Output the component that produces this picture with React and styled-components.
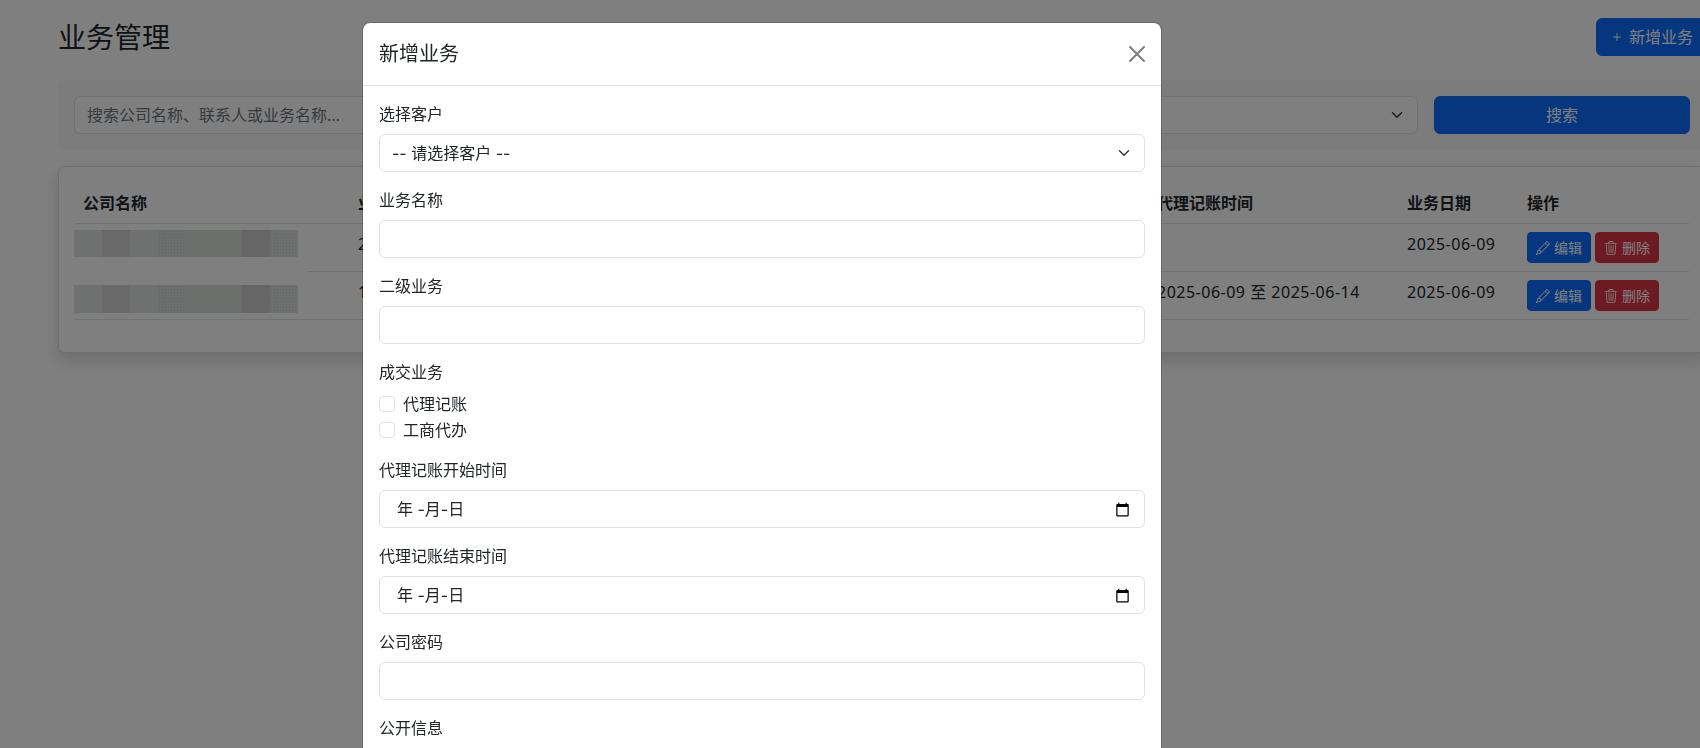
import React from 'react';
import styled, { createGlobalStyle } from 'styled-components';
import { BsPencil, BsPlus, BsTrash3 } from 'react-icons/bs';

const chevron = `url("data:image/svg+xml,%3csvg xmlns='http://www.w3.org/2000/svg' viewBox='0 0 16 16'%3e%3cpath fill='none' stroke='%23343a40' stroke-linecap='round' stroke-linejoin='round' stroke-width='2' d='m2 5 6 6 6-6'/%3e%3c/svg%3e")`;

// hyphens are wider in the control text than in the body font
const controlFont = `Inter, "Noto Sans CJK SC", sans-serif`;

const GlobalStyle = createGlobalStyle`
  * { box-sizing: border-box; }
  html, body { height: 100%; overflow: hidden; }
  body {
    margin: 0;
    background: #fff;
    color: #212529;
    font-family: "Noto Sans", "Noto Sans CJK SC", sans-serif;
    font-size: 16px;
    line-height: 24px;
  }
`;

const Main = styled.main`
  width: 1648px;
  margin-left: 58px;
  padding-top: 18px;
`;

const TopBar = styled.header`
  display: flex;
  align-items: center;
  justify-content: space-between;
  height: 38px;
  margin-bottom: 24px;
`;

const Title = styled.h1`
  margin: 0;
  font-size: 28px;
  font-weight: 400;
  line-height: 34px;
`;

const Button = styled.button`
  display: inline-flex;
  align-items: center;
  justify-content: center;
  height: ${p => (p.$small ? '31px' : '38px')};
  padding: ${p => (p.$small ? '0 8px' : '0 12px')};
  border: 1px solid ${p => (p.$danger ? '#dc3545' : '#0d6efd')};
  border-radius: ${p => (p.$small ? '4px' : '6px')};
  background: ${p => (p.$danger ? '#dc3545' : '#0d6efd')};
  color: #fff;
  font: inherit;
  font-size: ${p => (p.$small ? '14px' : '16px')};
  svg { flex: none; margin-right: 4px; }
`;

const SearchButton = styled(Button)`
  width: 100%;
`;

const SearchPanel = styled.section`
  display: grid;
  grid-template-columns: 800px 528px 256px;
  gap: 16px;
  padding: 16px;
  margin-bottom: 16px;
  background: #f8f9fa;
  border-radius: 6px;
`;

const controlBase = `
  display: block;
  width: 100%;
  height: 38px;
  padding: 6px 12px;
  border: 1px solid #dee2e6;
  border-radius: 6px;
  background-color: #fff;
  color: #212529;
  font: inherit;
  outline: none;
`;

const Input = styled.input`
  ${controlBase}
  &::placeholder { color: #6c757d; opacity: 1; }
`;

const Select = styled.select`
  ${controlBase}
  font-family: ${controlFont};
  appearance: none;
  padding-right: 36px;
  background-image: ${chevron};
  background-repeat: no-repeat;
  background-position: right 12px center;
  background-size: 16px 12px;
`;

const Card = styled.section`
  position: relative;
  padding: 16px;
  background: #fff;
  border: 1px solid rgba(0, 0, 0, 0.125);
  border-radius: 6px;
  box-shadow: 0 8px 16px rgba(0, 0, 0, 0.15);
`;

const Table = styled.table`
  width: 1614px;
  margin-bottom: 16px;
  border-collapse: collapse;
  table-layout: fixed;
  th, td {
    padding: 8px;
    border-bottom: 1px solid #dee2e6;
    text-align: left;
    vertical-align: top;
    white-space: nowrap;
  }
  th { font-weight: 700; }
`;

const DateText = styled.span`
  letter-spacing: 0.5px;
`;

const Actions = styled.div`
  display: flex;
  gap: 4px;
`;

// redacted company names, pasted over the first column
const Redaction = styled.div`
  position: absolute;
  left: 3px;
  top: 61px;
  width: 245px;
  height: 88px;
  padding: 2px 9px 0 12px;
  background: #fefefe;
`;

const MosaicBar = styled.div`
  display: grid;
  grid-template-columns: 28px 28px 28px 28px 56px 28px 28px;
  height: ${p => p.$height}px;
  margin-bottom: 28px;
`;

const MosaicCell = styled.div`
  background-color: ${p => p.$color};
  background-image: ${p => (p.$dotted ? 'radial-gradient(circle, #c8cac9 0.7px, transparent 0.8px)' : 'none')};
  background-size: 3px 3px;
`;

const Backdrop = styled.div`
  position: fixed;
  inset: 0;
  padding: 22px 0 0 362px;
  background: rgba(0, 0, 0, 0.5);
  overflow: hidden;
`;

const Dialog = styled.div`
  width: 800px;
  background: #fff;
  background-clip: padding-box;
  border: 1px solid rgba(0, 0, 0, 0.175);
  border-radius: 8px;
`;

const DialogHeader = styled.div`
  display: flex;
  align-items: center;
  justify-content: space-between;
  padding: 16px;
  border-bottom: 1px solid #dee2e6;
`;

const DialogTitle = styled.h2`
  margin: 0;
  font-size: 20px;
  font-weight: 400;
  line-height: 30px;
`;

const CloseButton = styled.button`
  display: flex;
  width: 16px;
  height: 16px;
  padding: 0;
  border: 0;
  background: none;
  color: #000;
  opacity: 0.5;
`;

const DialogBody = styled.form`
  padding: 16px;
`;

const Field = styled.div`
  margin-bottom: 16px;
`;

const Label = styled.label`
  display: block;
  margin-bottom: 8px;
`;

const CheckRow = styled.label`
  display: flex;
  align-items: flex-start;
  gap: 8px;
  min-height: 24px;
  margin-bottom: ${p => (p.$last ? '0' : '2px')};
`;

const Checkbox = styled.input.attrs({ type: 'checkbox' })`
  appearance: none;
  flex: none;
  width: 16px;
  height: 16px;
  margin: 4px 0 0;
  background: #fff;
  border: 1px solid #dee2e6;
  border-radius: 4px;
`;

const DateField = styled.div`
  display: flex;
  align-items: center;
  justify-content: space-between;
  height: 38px;
  padding: 0 14px 0 17px;
  border: 1px solid #dee2e6;
  border-radius: 6px;
  background: #fff;
`;

const DatePlaceholder = styled.span`
  font-family: ${controlFont};
  white-space: pre;
`;

const CalendarIcon = () => (
  <svg width="15" height="15" viewBox="0 0 24 24" fill="#000" aria-hidden="true">
    <path d="M20 3h-1V1h-2v2H7V1H5v2H4c-1.1 0-2 .9-2 2v16c0 1.1.9 2 2 2h16c1.1 0 2-.9 2-2V5c0-1.1-.9-2-2-2zm0 18H4V8h16v13z" />
  </svg>
);

const CloseIcon = () => (
  <svg width="16" height="16" viewBox="0 0 16 16" fill="currentColor" aria-hidden="true">
    <path d="M.293.293a1 1 0 0 1 1.414 0L8 6.586 14.293.293a1 1 0 1 1 1.414 1.414L9.414 8l6.293 6.293a1 1 0 0 1-1.414 1.414L8 9.414l-6.293 6.293a1 1 0 0 1-1.414-1.414L6.586 8 .293 1.707a1 1 0 0 1 0-1.414z" />
  </svg>
);

const mosaic = [
  { color: '#dce2de' },
  { color: '#d2d2d2' },
  { color: '#dce2de' },
  { color: '#dadedc', dotted: true },
  { color: '#d8ded9' },
  { color: '#cccccc' },
  { color: '#dae0de', dotted: true },
];

const rows = [
  { name: '2', range: '' },
  { name: '1', range: '2025-06-09 至 2025-06-14' },
];

const TextField = ({ label }) => (
  <Field>
    <Label>{label}</Label>
    <Input type="text" />
  </Field>
);

const DateInput = ({ label }) => (
  <Field>
    <Label>{label}</Label>
    <DateField>
      <DatePlaceholder>年 -月-日</DatePlaceholder>
      <CalendarIcon />
    </DateField>
  </Field>
);

const App = () => {
  return (
    <>
      <GlobalStyle />
      <Main>
        <TopBar>
          <Title>业务管理</Title>
          <Button type="button"><BsPlus size={16} />新增业务</Button>
        </TopBar>

        <SearchPanel>
          <Input type="text" placeholder="搜索公司名称、联系人或业务名称..." />
          <Select defaultValue="all">
            <option value="all">全部业务</option>
          </Select>
          <SearchButton type="button">搜索</SearchButton>
        </SearchPanel>

        <Card>
          <Table>
            <colgroup>
              <col style={{ width: 275 }} />
              <col style={{ width: 300 }} />
              <col style={{ width: 250 }} />
              <col style={{ width: 249 }} />
              <col style={{ width: 250 }} />
              <col style={{ width: 120 }} />
              <col style={{ width: 170 }} />
            </colgroup>
            <thead>
              <tr>
                <th>公司名称</th>
                <th>业务名称</th>
                <th>二级业务</th>
                <th>成交业务</th>
                <th>代理记账时间</th>
                <th>业务日期</th>
                <th>操作</th>
              </tr>
            </thead>
            <tbody>
              {rows.map(row => (
                <tr key={row.name}>
                  <td />
                  <td>{row.name}</td>
                  <td />
                  <td />
                  <td><DateText>{row.range}</DateText></td>
                  <td><DateText>2025-06-09</DateText></td>
                  <td>
                    <Actions>
                      <Button type="button" $small><BsPencil size={14} />编辑</Button>
                      <Button type="button" $small $danger><BsTrash3 size={14} />删除</Button>
                    </Actions>
                  </td>
                </tr>
              ))}
            </tbody>
          </Table>
          <Redaction>
            {[27, 28].map(height => (
              <MosaicBar key={height} $height={height}>
                {mosaic.map((cell, index) => (
                  <MosaicCell key={index} $color={cell.color} $dotted={cell.dotted} />
                ))}
              </MosaicBar>
            ))}
          </Redaction>
        </Card>
      </Main>

      <Backdrop>
        <Dialog role="dialog">
          <DialogHeader>
            <DialogTitle>新增业务</DialogTitle>
            <CloseButton type="button" aria-label="关闭"><CloseIcon /></CloseButton>
          </DialogHeader>
          <DialogBody>
            <Field>
              <Label>选择客户</Label>
              <Select defaultValue="">
                <option value="">-- 请选择客户 --</option>
              </Select>
            </Field>
            <TextField label="业务名称" />
            <TextField label="二级业务" />
            <Field>
              <Label>成交业务</Label>
              <CheckRow><Checkbox />代理记账</CheckRow>
              <CheckRow $last><Checkbox />工商代办</CheckRow>
            </Field>
            <DateInput label="代理记账开始时间" />
            <DateInput label="代理记账结束时间" />
            <TextField label="公司密码" />
            <TextField label="公开信息" />
          </DialogBody>
        </Dialog>
      </Backdrop>
    </>
  );
};

export default App;
